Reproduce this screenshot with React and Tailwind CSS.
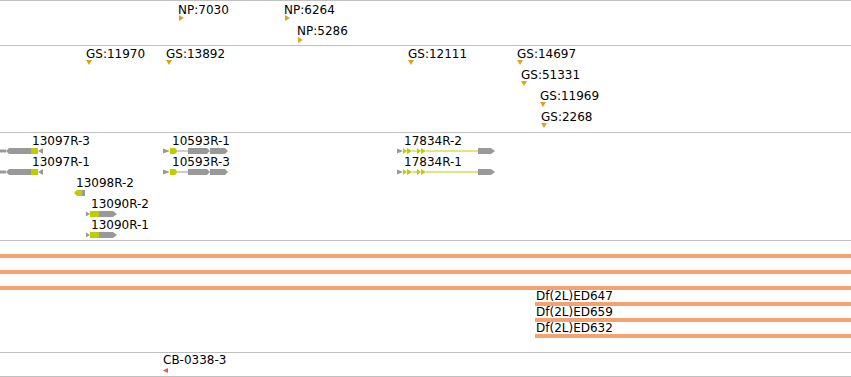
const GOLD = '#e3a21a';
const LIME = '#bfcc00';
const GREY = '#999999';
const RED = '#ea5a3a';

// a feature sits at its genomic x on the track; rows stack by flow
const Label = ({ x, children }) => (
  <div
    className="absolute top-0 whitespace-nowrap text-[12px] leading-none text-black"
    style={{ left: x }}
  >
    {children}
  </div>
);

// small triangle markers for point features
const Marker = ({ x, top, dir, color = GOLD }) => {
  const pts =
    dir === 'right' ? '0,0 5,3 0,6' : dir === 'left' ? '5,0 0,2.5 5,5' : '0,0 6,0 3,5';
  return (
    <svg className="absolute" style={{ left: x, top }} width="6" height="6" viewBox="0 0 6 6">
      <polygon points={pts} fill={color} />
    </svg>
  );
};

// transcript glyphs, drawn in local pixel coords (height 6)
const glyphs = {
  r13097: {
    w: 43,
    shapes: [
      ['rect', GREY, { x: 0, y: 1.5, width: 6, height: 3 }],
      ['poly', GREY, '6,3 9,0 31,0 31,6 9,6'],
      ['rect', LIME, { x: 31, y: 0, width: 7, height: 6 }],
      ['poly', GREY, '38,3 43,0 43,6'],
    ],
  },
  r10593: {
    w: 65,
    shapes: [
      ['poly', GREY, '0,0.5 7,3 0,5.5'],
      ['poly', LIME, '7,0 12,0 15,3 12,6 7,6'],
      ['rect', GREY, { x: 15, y: 2.5, width: 10, height: 1 }],
      ['poly', GREY, '25,0 44,0 47,3 44,6 25,6'],
      ['poly', GREY, '47,0 62,0 65,3 62,6 47,6'],
    ],
  },
  r17834: {
    w: 98,
    shapes: [
      ['poly', GREY, '0,0.5 6,3 0,5.5'],
      ['poly', LIME, '6,0 10,3 6,6'],
      ['poly', LIME, '10,0 15,3 10,6'],
      ['rect', LIME, { x: 15, y: 2.5, width: 5, height: 1 }],
      ['poly', LIME, '20,0 24,3 20,6'],
      ['poly', LIME, '24,0 29,3 24,6'],
      ['rect', LIME, { x: 29, y: 2.5, width: 52, height: 1 }],
      ['poly', GREY, '81,0 94,0 98,3 94,6 81,6'],
    ],
  },
  r13098: {
    w: 11,
    shapes: [
      ['poly', LIME, '0,3 3,0 8,0 8,6 3,6'],
      ['rect', GREY, { x: 8, y: 0, width: 3, height: 6 }],
    ],
  },
  r13090: {
    w: 31,
    shapes: [
      ['poly', GREY, '0,0.5 4,3 0,5.5'],
      ['rect', LIME, { x: 4, y: 0, width: 9, height: 6 }],
      ['poly', GREY, '13,0 27,0 31,3 27,6 13,6'],
    ],
  },
};

const Glyph = ({ x, kind }) => {
  const g = glyphs[kind];
  return (
    <svg className="absolute top-[13px]" style={{ left: x }} width={g.w} height="6" viewBox={`0 0 ${g.w} 6`}>
      {g.shapes.map(([t, fill, p], i) =>
        t === 'rect' ? <rect key={i} fill={fill} {...p} /> : <polygon key={i} fill={fill} points={p} />
      )}
    </svg>
  );
};

const npRows = [
  [
    { name: 'NP:7030', x: 178 },
    { name: 'NP:6264', x: 284 },
  ],
  [{ name: 'NP:5286', x: 297 }],
];

const gsRows = [
  [
    { name: 'GS:11970', x: 86 },
    { name: 'GS:13892', x: 166 },
    { name: 'GS:12111', x: 408 },
    { name: 'GS:14697', x: 517 },
  ],
  [{ name: 'GS:51331', x: 521 }],
  [{ name: 'GS:11969', x: 540 }],
  [{ name: 'GS:2268', x: 541 }],
];

const transcriptRows = [
  [
    { name: '13097R-3', lx: 32, gx: 0, kind: 'r13097' },
    { name: '10593R-1', lx: 172, gx: 163, kind: 'r10593' },
    { name: '17834R-2', lx: 404, gx: 397, kind: 'r17834' },
  ],
  [
    { name: '13097R-1', lx: 32, gx: 0, kind: 'r13097' },
    { name: '10593R-3', lx: 172, gx: 163, kind: 'r10593' },
    { name: '17834R-1', lx: 404, gx: 397, kind: 'r17834' },
  ],
  [{ name: '13098R-2', lx: 76, gx: 74, kind: 'r13098' }],
  [{ name: '13090R-2', lx: 91, gx: 86, kind: 'r13090' }],
  [{ name: '13090R-1', lx: 91, gx: 86, kind: 'r13090' }],
];

const deficiencies = ['Df(2L)ED647', 'Df(2L)ED659', 'Df(2L)ED632'];

export default function App() {
  return (
    <div
      className="flex flex-col w-[851px] h-[377px] overflow-hidden bg-white"
      style={{ fontFamily: '"DejaVu Sans", Verdana, sans-serif' }}
    >
      {/* NP insertions */}
      <div className="flex flex-col h-[45px] pt-[3px] border-t border-[#c0c0c0]">
        {npRows.map((row, i) => (
          <div key={i} className="relative h-[21px]">
            {row.map(f => (
              <div key={f.name}>
                <Label x={f.x}>{f.name}</Label>
                <Marker x={f.x + 1} top={11 + i} dir="right" />
              </div>
            ))}
          </div>
        ))}
      </div>

      {/* GS insertions */}
      <div className="flex flex-col h-[87px] pt-[2px] border-t border-[#c0c0c0]">
        {gsRows.map((row, i) => (
          <div key={i} className="relative h-[21px]">
            {row.map(f => (
              <div key={f.name}>
                <Label x={f.x}>{f.name}</Label>
                <Marker x={f.x} top={12} dir="down" />
              </div>
            ))}
          </div>
        ))}
      </div>

      {/* transcripts */}
      <div className="flex flex-col h-[108px] pt-[2px] border-t border-[#c0c0c0]">
        {transcriptRows.map((row, i) => (
          <div key={i} className="relative h-[21px]">
            {row.map(t => (
              <div key={t.name}>
                <Label x={t.lx}>{t.name}</Label>
                <Glyph x={t.gx} kind={t.kind} />
              </div>
            ))}
          </div>
        ))}
      </div>

      {/* deficiencies */}
      <div className="flex flex-col h-[112px] pt-[13px] border-t border-[#c0c0c0]">
        <div className="flex flex-col gap-[12px]">
          <div className="h-[4px] bg-[#f4a370]" />
          <div className="h-[4px] bg-[#f4a370]" />
          <div className="h-[4px] bg-[#f4a370]" />
        </div>
        <div className="flex flex-col pl-[535px]">
          {deficiencies.map(d => (
            <div key={d}>
              <div className="pl-px text-[12px] leading-[12px] text-black whitespace-nowrap">{d}</div>
              <div className="h-[4px] bg-[#f4a370]" />
            </div>
          ))}
        </div>
      </div>

      {/* aberrations */}
      <div className="relative h-[25px] pt-px border-y border-[#c0c0c0]">
        <div className="relative h-[21px]">
          <Label x={163}>CB-0338-3</Label>
          <Marker x={163} top={14} dir="left" color={RED} />
        </div>
      </div>
    </div>
  );
}
